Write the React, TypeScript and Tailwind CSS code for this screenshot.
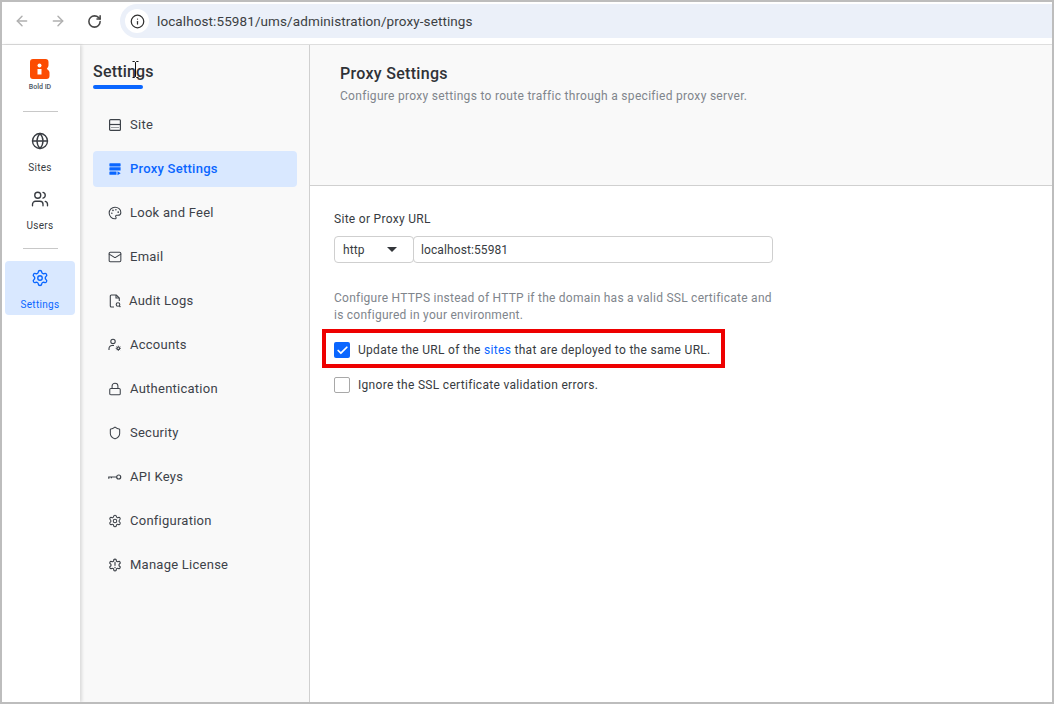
import { ArrowLeft, ArrowRight, Check, Globe, Info, Lock, Mail, Palette, RotateCw, Settings, Shield, Users } from 'lucide-react';
import type { ReactNode } from 'react';

const SiteIcon = () => (
  <svg width="14" height="14" viewBox="0 0 14 14" fill="none" stroke="currentColor" strokeWidth="1.2">
    <rect x="1.6" y="1.6" width="10.8" height="10.8" rx="1" />
    <path d="M1.6 6.5h10.8" />
    <path d="M3.5 9.500h7" strokeDasharray="1 1" />
  </svg>
);

const ProxyIcon = () => (
  <svg width="14" height="14" viewBox="0 0 14 14" fill="currentColor">
    <path d="M2 1.2h10a.6.6 0 0 1 .6.6v2a.6.6 0 0 1-.6.6H2a.6.6 0 0 1-.6-.6v-2a.6.6 0 0 1 .6-.6z" />
    <path d="M2 5.3h10.600v3.200H2a.6.6 0 0 1-.6-.6v-2a.6.6 0 0 1 .6-.6z" />
    <path d="M2 9.500h6.500v3.300H2a.6.6 0 0 1-.6-.6v-2.100a.6.6 0 0 1 .6-.6z" />
    <path d="M9.500 9.200l3.200 2-3.200 2z" />
  </svg>
);

const AuditIcon = () => (
  <svg width="14" height="14" viewBox="0 0 14 14" fill="none" stroke="currentColor" strokeWidth="1.100">
    <path d="M6 13H3.300a1 1 0 0 1-1-1V2a1 1 0 0 1 1-1h5l3 3v3" />
    <path d="M8 1v3h3" />
    <circle cx="10" cy="10.500" r="1.800" />
    <path d="M11.400 12l1 1" />
  </svg>
);

const AccountsIcon = () => (
  <svg width="14" height="14" viewBox="0 0 14 14" fill="none" stroke="currentColor" strokeWidth="1.100">
    <circle cx="5" cy="3.400" r="2.200" />
    <path d="M1 12v-1.500a3 3 0 0 1 3-3h2" />
    <circle cx="10.300" cy="10.300" r="1.300" />
    <path d="M10.300 7.700v1.200M10.300 11.700v1.200M7.700 10.300h1.200M11.700 10.300h1.200M8.500 8.500l.8.800M11.300 11.300l.8.800M8.500 12.100l.8-.8M11.300 9.300l.8-.8" strokeWidth="0.900" />
  </svg>
);

const KeyIcon = () => (
  <svg width="14" height="14" viewBox="0 0 14 14" fill="none" stroke="currentColor" strokeWidth="1.200">
    <circle cx="10.700" cy="7" r="2" />
    <path d="M8.700 7H.8v1.800M3.400 7v1.300" />
  </svg>
);

const LicenseIcon = () => (
  <svg width="14" height="14" viewBox="0 0 24 24" fill="none" stroke="currentColor" strokeWidth="2" strokeLinecap="round" strokeLinejoin="round">
    <path d="M12.220 2h-.44a2 2 0 0 0-2 2v.18a2 2 0 0 1-1 1.730l-.43.25a2 2 0 0 1-2 0l-.15-.08a2 2 0 0 0-2.730.73l-.22.380a2 2 0 0 0 .73 2.730l.15.100a2 2 0 0 1 1 1.720v.510a2 2 0 0 1-1 1.740l-.15.090a2 2 0 0 0-.73 2.730l.22.380a2 2 0 0 0 2.730.730l.15-.08a2 2 0 0 1 2 0l.43.250a2 2 0 0 1 1 1.730V20a2 2 0 0 0 2 2h.44a2 2 0 0 0 2-2v-.18a2 2 0 0 1 1-1.730l.43-.25a2 2 0 0 1 2 0l.15.080a2 2 0 0 0 2.730-.730l.22-.390a2 2 0 0 0-.73-2.730l-.15-.080a2 2 0 0 1-1-1.740v-.5a2 2 0 0 1 1-1.740l.15-.090a2 2 0 0 0 .73-2.730l-.22-.380a2 2 0 0 0-2.730-.730l-.15.080a2 2 0 0 1-2 0l-.43-.250a2 2 0 0 1-1-1.730V4a2 2 0 0 0-2-2z" />
    <path d="M12 7.500v5M12 16v.5" />
  </svg>
);

const Logo = () => (
  <svg width="20" height="20" viewBox="0 0 20 20">
    <path d="M3 0h12.500A3 3 0 0 1 18.500 3v3.200c0 1.500-1 2.600-1.700 3.600.7 1 2.700 2 2.700 3.600v3.600a3 3 0 0 1-3 3H3a3 3 0 0 1-3-3V3a3 3 0 0 1 3-3z" fill="#fc4c02" />
    <circle cx="9.500" cy="6.500" r="2" fill="#fff" />
    <path d="M7.500 10h4v5.500h-4z" fill="#fff" />
  </svg>
);

const menu: { label: string; icon: ReactNode; active?: boolean; gap?: string }[] = [
  { label: 'Site', icon: <SiteIcon /> },
  { label: 'Proxy Settings', icon: <ProxyIcon />, active: true },
  { label: 'Look and Feel', icon: <Palette size={14} strokeWidth={1.8} /> },
  { label: 'Email', icon: <Mail size={14} strokeWidth={1.8} /> },
  { label: 'Audit Logs', icon: <AuditIcon />, gap: 'gap-[7px]' },
  { label: 'Accounts', icon: <AccountsIcon /> },
  { label: 'Authentication', icon: <Lock size={14} strokeWidth={1.8} /> },
  { label: 'Security', icon: <Shield size={14} strokeWidth={1.8} /> },
  { label: 'API Keys', icon: <KeyIcon /> },
  { label: 'Configuration', icon: <Settings size={14} strokeWidth={1.8} /> },
  { label: 'Manage License', icon: <LicenseIcon /> },
];

const App = () => (
  <div className="relative w-[1054px] h-[704px] border-2 border-[#bdbdbd] bg-white flex flex-col overflow-hidden font-['Roboto',sans-serif] text-[#373b41]">
    {/* browser bar */}
    <div className="h-[43px] shrink-0 border-b border-[#dedede] pt-[2px] flex">
      <div className="w-[118px] h-[34px] flex items-center pl-[12px] text-[#5f6368]">
        <ArrowLeft size={16} strokeWidth={2.200} className="text-[#b0b0b0]" />
        <ArrowRight size={16} strokeWidth={2.200} className="text-[#b0b0b0] ml-[20px]" />
        <RotateCw size={15} strokeWidth={2.500} className="ml-[21px] text-[#474747]" />
      </div>
      <div className="flex-1 h-[34px] bg-[#ebf0f9] rounded-l-full flex items-center pl-[5px]">
        <div className="w-[24px] h-[24px] rounded-full bg-white flex items-center justify-center">
          <Info size={15} strokeWidth={2} className="text-[#303030]" />
        </div>
        <span className="ml-[8px] text-[13.5px] tracking-[0.1px] text-[#3c3f43]">
          localhost:55981/ums/administration/proxy-settings
        </span>
      </div>
    </div>

    <div className="flex flex-1 min-h-0">
      {/* icon rail */}
      <div className="w-[78px] shrink-0 pr-[2px] flex flex-col items-center pt-[14px] z-10 shadow-[2px_0_3px_rgba(0,0,0,0.12)] bg-white">
        <Logo />
        <span className="mt-[4px] text-[7px] leading-[9px] font-medium text-[#4b5563]">Bold ID</span>
        <div className="w-[35px] h-px bg-[#c8c8c8] mt-[19px]" />
        <div className="w-[70px] h-[54px] flex flex-col items-center pt-[20px]">
          <Globe size={18} strokeWidth={1.800} className="shrink-0" />
          <span className="mt-[12px] text-[10px] leading-[12px] tracking-[0.3px]">Sites</span>
        </div>
        <div className="w-[70px] h-[66px] flex flex-col items-center pt-[24px]">
          <Users size={18} strokeWidth={1.800} className="shrink-0" />
          <span className="mt-[12px] text-[10px] leading-[12px] tracking-[0.3px]">Users</span>
        </div>
        <div className="w-[35px] h-px bg-[#c8c8c8] mt-[16px]" />
        <div className="w-[70px] h-[54px] mt-[12px] rounded-[4px] bg-[#d9e8ff] text-[#0a66ff] flex flex-col items-center pt-[8px]">
          <Settings size={18} strokeWidth={1.800} className="shrink-0" />
          <span className="mt-[12px] text-[10px] leading-[12px] tracking-[0.3px]">Settings</span>
        </div>
      </div>

      {/* settings menu */}
      <div className="w-[230px] shrink-0 bg-[#f9f9f9] border-r border-[#d0d0d0] pl-[13px] pr-[12px]">
        <div className="pt-[17px] w-fit">
          <div className="text-[16px] leading-[20px] font-medium tracking-[0.2px] text-[#2f3237]">Settings</div>
        </div>
        <div className="w-[50px] h-[4px] mt-[3px] rounded-full bg-[#0a66ff]" />
        <div className="mt-[18px] flex flex-col gap-[8px]">
          {menu.map((item) => (
            <div
              key={item.label}
              className={`h-[36px] rounded-[4px] pl-[15px] flex items-center ${item.gap ?? 'gap-[8px]'} text-[13px] tracking-[0.25px] ${item.active ? 'bg-[#d9e8ff] text-[#0a66ff] font-medium' : 'text-[#3d4249]'}`}
            >
              {item.icon}
              <span>{item.label}</span>
            </div>
          ))}
        </div>
      </div>

      {/* content */}
      <div className="flex-1 min-w-0">
        <div className="h-[141px] bg-[#f9f9f9] border-b border-[#d0d0d0] pl-[30px] pt-[19px]">
          <div className="text-[16px] leading-[20px] font-medium tracking-[0.3px] text-[#2f3237]">Proxy Settings</div>
          <div className="mt-[4px] text-[12px] leading-[16px] tracking-[0.3px] text-[#80858c]">
            Configure proxy settings to route traffic through a specified proxy server.
          </div>
        </div>
        <div className="pl-[24px] pt-[25px]">
          <div className="text-[12px] leading-[16px] tracking-[0.3px]">Site or Proxy URL</div>
          <div className="mt-[9px] flex w-[439px] h-[27px] text-[12px] tracking-[0.1px]">
            <div className="w-[80px] border border-[#cfcfcf] rounded-[4px] pl-[8px] pr-[16px] flex items-center justify-between">
              <span>http</span>
              <span className="w-0 h-0 border-x-[5px] border-x-transparent border-t-[5px] border-t-[#33363a]" />
            </div>
            <div className="flex-1 -ml-px border border-[#cfcfcf] rounded-[4px] pl-[7px] flex items-center">localhost:55981</div>
          </div>
          <div className="mt-[27px] w-[445px] text-[12px] leading-[17px] tracking-[0.25px] text-[#80858c]">
            Configure HTTPS instead of HTTP if the domain has a valid SSL certificate and is configured in your environment.
          </div>
          <div className="mt-[18px] flex items-center gap-[8px] h-[16px] text-[12px] tracking-[0.3px]">
            <span className="w-[16px] h-[16px] rounded-[2px] bg-[#0a66ff] flex items-center justify-center text-white">
              <Check size={13} strokeWidth={3.200} />
            </span>
            <span>
              Update the URL of the <span className="text-[#0a66ff]">sites</span> that are deployed to the same URL.
            </span>
          </div>
          <div className="mt-[19px] flex items-center gap-[8px] h-[16px] text-[12px] tracking-[0.3px]">
            <span className="w-[16px] h-[16px] rounded-[2px] border border-[#a8a8a8] bg-white" />
            <span>Ignore the SSL certificate validation errors.</span>
          </div>
        </div>
      </div>
    </div>

    {/* annotation and text cursor over the page */}
    <div className="absolute left-[320px] top-[327px] w-[403px] h-[39px] border-4 border-[#ee0000] pointer-events-none" />
    <svg className="absolute left-[130px] top-[59px] pointer-events-none" width="7" height="17" viewBox="0 0 7 17" fill="none" stroke="#111" strokeWidth="1">
      <path d="M.5.500h2l1 1 1-1h2M3.500 1.500v14M.5 16.500h2l1-1 1 1h2" />
    </svg>
  </div>
);

export default App;
